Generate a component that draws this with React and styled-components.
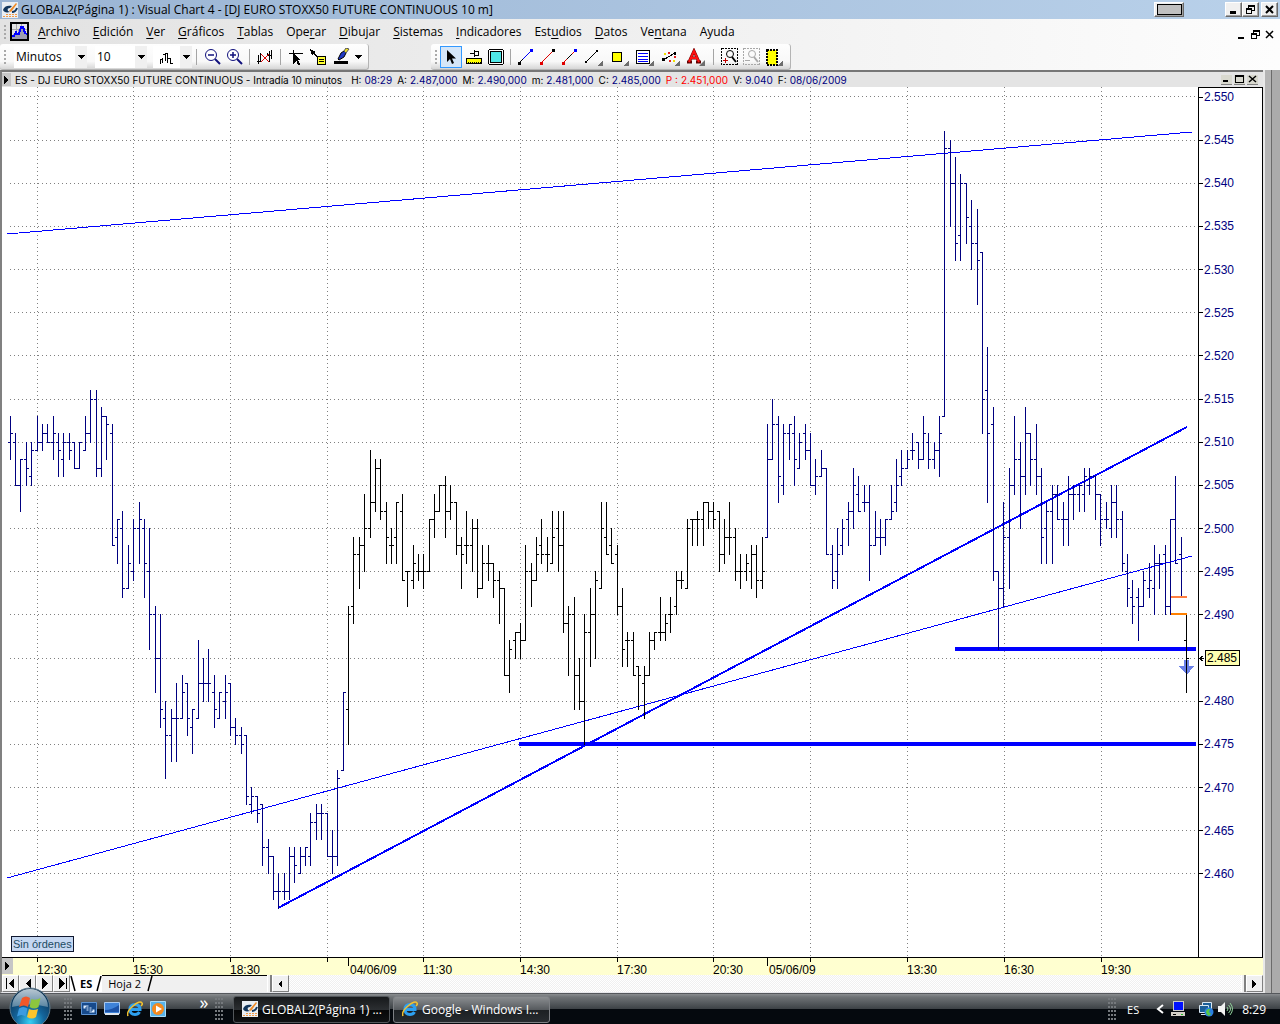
import React, { useState } from 'react';
import styled, { createGlobalStyle, css } from 'styled-components';

const GlobalStyle = createGlobalStyle`
  * { box-sizing: border-box; }
  body { margin: 0; font-family: "Open Sans", "Noto Sans", sans-serif; font-size: 12px; color: #000; background: #ababab; }
  button, select { font: inherit; color: inherit; margin: 0; padding: 0; border: 0; background: none; }
  svg { display: block; flex: none; }
`;

/* ---------- chart data ---------- */

// [open, high, low, close] of every 10 minute bar, in points over 2400
const BARS = [
  [110,113,108,111],[110,111,105,105],[105,108,102,108],[108,110,105,107],[106,110,105,109],[109,113,109,110],
  [110,112,109,111],[111,112,110,110],[110,113,108,111],[110,111,106,109],[108,111,106,110],[110,111,108,109],
  [110,110,107,107],[107,110,107,110],[109,113,109,111],[111,116,110,115],[115,116,106,107],[107,114,106,113],
  [113,113,108,112],[111,112,98,98],[99,101,96,101],[100,102,92,93],[93,98,93,96],[95,101,94,100],
  [100,103,96,101],[100,101,92,96],[95,100,86,90],[90,91,81,85],[85,90,77,79],[78,80,71,76],
  [76,79,73,78],[78,82,73,78],[78,83,78,81],[82,82,76,78],[77,79,74,79],[78,87,78,82],
  [82,85,80,82],[82,86,80,82],[81,83,77,79],[78,81,78,81],[80,83,78,81],[82,82,76,77],
  [77,78,75,76],[76,77,74,75],[76,76,68,69],[68,70,67,69],[69,69,66,67],[68,68,61,63],
  [63,64,60,62],[62,62,57,58],[58,60,56,58],[58,60,57,58],[58,63,57,62],[62,63,59,61],
  [60,63,60,62],[62,63,61,63],[62,67,61,66],[66,68,64,67],[67,68,64,67],[67,67,62,62],
  [62,65,60,62],[62,72,61,71],[72,81,72,81],[79,91,75,90],[91,99,89,97],[97,99,93,98],
  [98,104,95,100],[100,109,99,103],[103,108,102,107],[107,108,101,102],[102,103,96,99],[98,100,96,98],
  [99,103,96,103],[102,104,94,94],[95,95,91,95],[94,98,93,96],[95,97,94,95],[95,97,93,95],
  [95,101,95,101],[101,104,99,102],[102,105,102,105],[105,106,99,102],[102,105,101,103],[103,103,97,98],
  [98,99,93,97],[98,102,96,98],[98,101,95,100],[100,101,92,93],[93,98,93,96],[96,98,94,96],
  [96,96,92,94],[94,95,89,93],[93,93,83,83],[83,87,81,86],[87,88,85,88],[88,89,85,87],
  [87,98,87,95],[95,96,91,94],[94,99,94,97],[98,101,96,97],[97,99,95,97],[96,102,96,99],
  [100,102,95,98],[98,102,88,89],[89,91,83,90],[90,92,79,83],[83,85,79,80],[80,90,75,88],
  [88,93,84,90],[90,95,85,94],[93,103,93,100],[99,103,97,97],[98,100,96,96],[97,98,90,91],
  [91,93,84,86],[87,88,84,87],[87,88,83,83],[84,84,79,83],[82,84,78,83],[83,88,83,87],
  [87,88,86,88],[88,92,87,88],[88,90,87,89],[90,92,88,90],[91,95,90,94],[94,95,93,94],
  [93,101,93,100],[101,101,98,101],[101,102,98,101],[101,103,98,103],[103,103,100,102],[102,103,100,101],
  [102,102,95,97],[97,101,96,99],[99,103,97,99],[99,100,94,95],[95,97,93,95],[95,97,94,96],
  [95,98,93,97],[97,98,92,94],[94,99,93,95],[99,112,99,108],[108,115,108,112],[112,113,103,106],
  [105,112,104,111],[111,112,108,112],[111,113,105,108],[107,111,107,110],[111,112,108,109],[109,111,105,105],
  [105,108,104,106],[106,109,106,107],[107,107,97,97],[97,98,93,94],[95,100,93,97],[98,101,97,100],
  [101,103,98,102],[102,107,100,105],[104,106,102,102],[103,105,102,103],[103,105,94,98],[98,102,98,99],
  [99,101,97,99],[99,101,98,101],[101,105,101,102],[103,108,102,105],[106,109,105,107],[107,109,107,108],
  [109,111,108,109],[110,110,107,108],[108,113,108,111],[110,111,107,108],[108,110,107,109],[109,113,106,111],
  [113,146,113,144],[144,145,135,140],[140,143,131,133],[134,141,131,140],[140,140,133,136],[135,138,130,133],
  [133,137,126,131],[132,132,111,115],[116,121,103,111],[112,114,94,95],[95,95,86,93],[93,103,91,99],
  [99,107,93,105],[105,113,104,108],[108,110,100,106],[106,114,104,111],[111,111,105,108],[108,112,104,106],
  [106,107,96,99],[100,103,96,102],[102,105,96,104],[104,105,101,101],[101,103,98,101],[101,106,98,104],
  [104,105,101,104],[104,105,102,105],[104,107,102,106],[105,107,104,106],[106,106,101,104],[104,104,98,101],
  [101,103,100,101],[100,105,99,103],[103,105,99,101],[101,102,95,96],[95,97,91,93],[92,94,89,91],
  [92,93,87,91],[91,95,91,94],[93,96,92,94],[93,98,90,96],[96,97,93,96],[97,98,90,91],
  [91,101,90,101],[101,106,96,96],[97,99,92,92],[87,90,81,85],
];

const PLOT_W = 1196;
const PLOT_H = 870;
const LAST = 2485;
const LEVELS = Array.from({ length: 19 }, (_, i) => 2550 - i * 5);
const GRID_X = [35, 131, 228, 325, 421, 518, 615, 711, 808, 905, 1002, 1099];

const TIMES = [
  { x: 35, label: '12:30' },
  { x: 131, label: '15:30' },
  { x: 228, label: '18:30' },
  { x: 325 },
  { x: 346, label: '04/06/09', day: true },
  { x: 421, label: '11:30' },
  { x: 518, label: '14:30' },
  { x: 615, label: '17:30' },
  { x: 711, label: '20:30' },
  { x: 765, label: '05/06/09', day: true },
  { x: 808 },
  { x: 905, label: '13:30' },
  { x: 1002, label: '16:30' },
  { x: 1099, label: '19:30' },
];

const yOf = (price) => Math.round(9.4 + (2550 - price) * 8.633) + 0.5;
const xOf = (i) => Math.floor(8.15 + i * 5.372) + 0.5;

// the session of the 4th and the bar in progress are drawn in black
const isBlack = (i) => (i >= 63 && i <= 140) || i === BARS.length - 1;

const barPath = (black) =>
  BARS.map(([o, h, l, c], i) => {
    if (isBlack(i) !== black) return '';
    const x = xOf(i);
    return (
      `M${x} ${yOf(2400 + h) - 0.5}V${yOf(2400 + l) + 0.5}` +
      `M${x - 2.5} ${yOf(2400 + o)}H${x}M${x} ${yOf(2400 + c)}H${x + 2.5}`
    );
  }).join('');

const fmt = (n) => (n / 1000).toFixed(3);

/* ---------- window frame ---------- */

const Screen = styled.div`
  display: flex;
  flex-direction: column;
  min-height: 100vh;
  background: #f0f0f0;
`;

const TitleBar = styled.header`
  display: flex;
  align-items: center;
  height: 19px;
  padding: 0 2px;
  background: linear-gradient(90deg, #9ab4d3, #b9d1ea);
`;

const Title = styled.h1`
  flex: 1;
  margin: 0 0 0 3px;
  font-size: 12px;
  line-height: 18px;
  font-weight: 400;
  white-space: nowrap;
`;

const FrameButton = styled.button`
  display: flex;
  align-items: center;
  justify-content: center;
  width: ${(p) => p.$wide || 17}px;
  height: 15px;
  margin-right: ${(p) => p.$after || 0}px;
  background: #f0f0f0;
  border: 1px solid;
  border-color: #fff #696969 #696969 #fff;
  box-shadow: inset -1px -1px #a0a0a0;
`;

const Placeholder = styled.span`
  width: 25px;
  height: 11px;
  border: 1px solid #000;
  background: #c0c0c0;
`;

const Bars = styled.div`
  background: linear-gradient(90deg, #e2e2e2, #fdfdfd);
`;

const MenuBar = styled.nav`
  display: flex;
  align-items: center;
  height: 25px;
  padding: 0 5px 0 4px;
`;

const Grip = styled.span`
  flex: none;
  width: 2px;
  height: 14px;
  margin-right: ${(p) => p.$after || 0}px;
  background: repeating-linear-gradient(#a9a9a9 0 2px, transparent 2px 4px);
`;

const MenuList = styled.div`
  display: flex;
  flex: 1;
  gap: 13px;
  margin-left: 9px;
`;

const MenuButton = styled.button`
  line-height: 20px;
  u { text-underline-offset: 2px; }
`;

const ChildControls = styled.div`
  display: flex;
  gap: 3px;
  padding-top: 6px;
`;

const IconButton = styled.button`
  display: flex;
  align-items: center;
  justify-content: center;
`;

const ToolRow = styled.div`
  display: flex;
  height: 26px;
  gap: 62px;
`;

const ToolBar = styled.div`
  display: flex;
  align-items: center;
  height: 26px;
  padding: 0 4px;
  background: linear-gradient(#fefefe, #f8f8f8 70%, #d6d6d6);
  border-right: 1px solid #b4b4b4;
  border-bottom: 1px solid #b4b4b4;
  border-radius: 3px;
`;

const Combo = styled.div`
  position: relative;
  width: ${(p) => p.$width}px;
  margin-left: ${(p) => p.$before || 8}px;
  height: 22px;
  background: #fff;
`;

const Select = styled.select`
  appearance: none;
  width: 100%;
  height: 22px;
  padding: 0 2px;
  outline: 0;
`;

const ComboArrow = styled.span`
  position: absolute;
  top: 0;
  right: 0;
  display: flex;
  align-items: center;
  justify-content: center;
  width: 12px;
  height: 22px;
  background: #f0f0f0;
  pointer-events: none;
`;

const ToolSep = styled.span`
  width: 1px;
  height: 16px;
  margin: 0 4px;
  background: #a5a5a5;
`;

const Tool = styled.button`
  display: flex;
  align-items: center;
  justify-content: center;
  width: ${(p) => p.$width || 22}px;
  height: 22px;
  ${(p) =>
    p.$active &&
    css`
      background: #d5e6f8;
      border: 1px solid #3399ff;
    `}
`;

/* ---------- chart window ---------- */

const Workspace = styled.main`
  display: flex;
  flex: 1;
`;

const ChartWindow = styled.section`
  display: flex;
  flex: 1;
  flex-direction: column;
  min-width: 0;
  border-left: 2px solid #808080;
  border-top: 2px solid #767676;
  border-bottom: 1px solid #e8e8ec;
  background: #fff;
`;

const Strip = styled.div`
  display: flex;
  width: 17px;
  border-left: 2px solid #e8e8e8;
  background: linear-gradient(90deg, #b4b4b4 0 6px, #6b6b6b 6px 7px, #ababab 7px);
`;

const Caption = styled.header`
  display: flex;
  align-items: center;
  height: 15px;
  padding-right: 5px;
  background: #e4e4e4;
  font: 10px Inter, "Liberation Sans", sans-serif;
`;

const Expand = styled.button`
  display: flex;
  align-items: center;
  justify-content: center;
  width: 9px;
  height: 13px;
  background: #c6c6c6;
`;

const Quote = styled.dl`
  display: flex;
  flex: 1;
  gap: 5px;
  margin: 0 0 0 9px;
  white-space: nowrap;
`;

const Field = styled.div`
  display: flex;
  gap: 3px;
  color: ${(p) => p.$color || '#000'};
  dd { margin: 0; color: ${(p) => p.$color || '#000080'}; }
`;

const Name = styled.span`
  margin-left: 4px;
  white-space: nowrap;
`;

const CaptionButtons = styled.div`
  display: flex;
  gap: 2px;
`;

const CaptionButton = styled.button`
  display: flex;
  align-items: center;
  justify-content: center;
  width: 11px;
  height: 10px;
  background: #d8d8ce;
  border-bottom: 1px solid #808080;
`;

const ChartBody = styled.div`
  display: flex;
  flex: 1;
  min-height: 600px;
  border-bottom: 1px solid #000;
`;

const PlotArea = styled.div`
  position: relative;
  flex: 1;
  min-width: 0;
`;

const PlotSvg = styled.svg`
  position: absolute;
  width: 100%;
  height: 100%;
`;

const Orders = styled.button`
  position: absolute;
  left: 9px;
  bottom: 5px;
  height: 16px;
  padding: 0 1px;
  border: 1px solid #101830;
  background: #c6d8f2;
  color: #1d4b63;
  font: 11px/14px "Liberation Sans", Arial, sans-serif;
`;

const PriceAxis = styled.ol`
  display: flex;
  flex-direction: column;
  justify-content: space-between;
  width: 65px;
  margin: 0;
  padding: 1px 0 75px;
  list-style: none;
  border: 1px solid #000;
  border-bottom: 0;
  color: #000080;
  font: 12px/16px "Liberation Sans", Arial, sans-serif;
`;

const Level = styled.li`
  display: flex;
  align-items: center;
  height: 16px;
  &::before {
    content: '';
    width: 4px;
    height: 1px;
    margin-right: 1px;
    background: #000;
  }
`;

const LastPrice = styled.li`
  display: flex;
  align-items: center;
  gap: 1px;
  height: 16px;
  color: #000;
  span {
    padding: 0 2px 0 1px;
    line-height: 14px;
    border: 1px solid #000;
    background: #ffffb0;
  }
`;

const TimeRow = styled.div`
  display: flex;
  align-items: stretch;
  height: 17px;
  background: #ffffd0;
`;

const TimeSvg = styled.svg`
  flex: 1;
  height: 17px;
  overflow: visible;
  font: 12px "Liberation Sans", Arial, sans-serif;
`;

const TimeArea = styled.div`
  display: flex;
  flex: 1;
  margin-left: -11px;
  padding-right: 65px;
`;

const TimeExpand = styled(Expand)`
  position: relative;
  width: 11px;
  height: 16px;
`;

const SheetBar = styled.div`
  display: flex;
  align-items: stretch;
  height: 17px;
  background: #f0f0f0;
`;

const SheetButton = styled.button`
  display: flex;
  align-items: center;
  justify-content: center;
  width: 17px;
  background: #f0f0f0;
  border: 1px solid;
  border-color: #fff #808080 #808080 #fff;
`;

const Sheets = styled.div`
  display: flex;
  width: 197px;
  border-top: 1px solid #000;
`;

const Sheet = styled.button`
  display: flex;
  align-items: center;
  gap: ${(p) => (p.$on ? 4 : 6)}px;
  padding-left: ${(p) => (p.$on ? 0 : 6)}px;
  line-height: 15px;
  margin-top: -1px;
  font-size: 11px;
  font-weight: ${(p) => (p.$on ? 700 : 400)};
  background: ${(p) => (p.$on ? '#fff' : 'none')};
`;

const Splitter = styled.span`
  width: 5px;
  border-right: 2px solid #808080;
  border-left: 1px solid #fff;
`;

const Track = styled.div`
  flex: 1;
  background: repeating-conic-gradient(#f0f0f0 0 25%, #fff 0 50%) 0 0 / 2px 2px;
`;

/* ---------- taskbar ---------- */

const TaskBar = styled.footer`
  position: relative;
  display: flex;
  align-items: center;
  height: 31px;
  padding: 0 14px 0 64px;
  border-top: 1px solid #55585c;
  background: linear-gradient(#8a8d90, #6f7376 3px, #3c4145 15px, #05090e 15px, #05090e);
  color: #fff;
`;

const StartButton = styled.button`
  position: absolute;
  left: 9px;
  bottom: -5px;
`;

const TaskGrip = styled.span`
  flex: none;
  width: 8px;
  height: 22px;
  background: radial-gradient(circle at 1px 1px, #75797d 1px, transparent 1px) 0 0 / 3px 4px;
`;

const QuickLaunch = styled.div`
  display: flex;
  gap: 7px;
  margin-left: 9px;
`;

const More = styled.button`
  width: 12px;
  margin: -14px 5px 0 32px;
  font-size: 18px;
  line-height: 16px;
`;

const Task = styled.button`
  display: flex;
  align-items: center;
  gap: 4px;
  width: 157px;
  height: 27px;
  margin-left: ${(p) => p.$before}px;
  padding: 0 8px;
  border: 1px solid ${(p) => (p.$active ? '#53575b' : '#7d8084')};
  border-radius: 3px;
  background: ${(p) =>
    p.$active
      ? 'linear-gradient(#17191b, #2c2f32 13px, #050607 13px, #101214)'
      : 'linear-gradient(#8b8e91, #55595d 13px, #1c2023 13px, #272b2f)'};
  white-space: nowrap;
`;

const Tray = styled.div`
  display: flex;
  align-items: center;
  margin-left: auto;
`;

const TrayText = styled.span`
  margin: ${(p) => p.$margin};
  font-size: ${(p) => p.$size || 12}px;
`;

/* ---------- icons ---------- */

const Down = () => (
  <svg width="7" height="4" shapeRendering="crispEdges">
    <path d="M0 0h7L3.500 4z" />
  </svg>
);

const Ico = ({ w = 16, h = 16, children, soft }) => (
  <svg width={w} height={h} viewBox={`0 0 ${w} ${h}`} fill="none" stroke="#000" shapeRendering={soft ? 'auto' : 'crispEdges'}>
    {children}
  </svg>
);

const Corner = () => <path d="M18 12v6h-6z" fill="#6d6d6d" stroke="none" />;

const AppIcon = () => (
  <Ico soft>
    <path d="M0 0h16v16H0z" fill="#e9eef3" stroke="none" />
    <path d="M1 8c1-4 5-5 9-4l-2 2c-2 0-3 1-2 3l2 1c-4 1-6 0-7-2z" fill="#12365c" stroke="none" />
    <path d="M7 9l7-8 1 1-6 8z" fill="#f08a24" stroke="none" />
    <path d="M10 10c3 0 4-1 5-4" stroke="#12365c" strokeWidth="2" />
    <path d="M4 12.500h11M1 14.500h14" stroke="#f39a45" strokeDasharray="2 1" />
  </Ico>
);

const ChartIcon = () => (
  <Ico w={19} h={19}>
    <path d="M0 0h19v19H0z" fill="#000" stroke="none" />
    <path d="M2 2h15v15H2z" fill="#e4e4e4" stroke="none" />
    <path d="M6.500 2v15M11.500 2v15M2 7.500h15" stroke="#a8a8a8" />
    <path d="M2 17v-3l3-4 2 2 3-7h3l4 7v5z" fill="#9c9cb0" stroke="none" />
    <path d="M2 14h2l2-4 1 2h2l2-7h2l2 6 2 1" stroke="#0000ff" strokeWidth="2" />
  </Ico>
);

const Min = ({ bold }) => (
  <Ico w={11} h={11}>
    <path d="M2 8.500h6" strokeWidth={bold ? 3 : 2} />
  </Ico>
);

const Restore = () => (
  <Ico w={11} h={11}>
    <path d="M3 1.500h7M3.500 1v3M9.500 1v6M7 6.500h3M3 2.500h7M1 4.500h6M1 5.500h6M1.500 4v6M6.500 4v6M1 9.500h6" />
  </Ico>
);

const Close = ({ bold }) => (
  <Ico w={11} h={11} soft>
    <path d="M2 2l7 7M9 2l-7 7" strokeWidth={bold ? 2 : 1.500} />
  </Ico>
);

const BarsIcon = () => (
  <Ico w={14}>
    <path d="M1.500 10v5M1 10.500h2M3.500 9v5M6.500 4v8M6 5.500h-2M7 4.500h2M8.500 4v10M11.500 9v6M11 9.500h-2M11.500 14.500h3" />
  </Ico>
);

const Magnifier = ({ plus }) => (
  <Ico w={17} h={17} soft>
    <circle cx="7" cy="7" r="5.500" stroke="#10107c" fill="#fff" />
    <path d="M11 11l5 5" stroke="#10107c" strokeWidth="2" />
    <path d={plus ? 'M4 7h6M7 4v6' : 'M4 7h6'} stroke="#10107c" strokeWidth="1.500" />
  </Ico>
);

const NoBars = () => (
  <Ico>
    <path d="M1.500 6v9M3.500 4v9M0 12.500h4M12.500 2v11M14.500 1v9M11 6.500h4M10.500 4v3" />
    <path d="M4 5l8 8M12 5l-8 8" stroke="#e00000" />
  </Ico>
);

const CrossCursor = () => (
  <Ico>
    <path d="M1 4.500h14M5.500 1v14" />
    <path d="M6 5l7 6-3 .5 2 4-2 .5-1.500-4L6 14z" fill="#000" stroke="none" />
  </Ico>
);

const NoteCursor = () => (
  <Ico>
    <path d="M0 0l6 3-2 1 4 4-1 1-4-4-1 2z" fill="#000" stroke="none" />
    <path d="M7.500 7.500h8v8h-8z" fill="#ffff30" />
    <path d="M9 10.500h5M9 12.500h5" />
  </Ico>
);

const Pen = () => (
  <Ico w={17} h={17} soft>
    <path d="M1 13h14v3H1z" fill="#000" stroke="none" />
    <path d="M5 11l3-6 3-2 2 2-2 4-5 3z" fill="#2038c0" stroke="#000" />
    <path d="M11 3l2-3 3 1-3 4z" fill="#f0e020" stroke="#555" />
  </Ico>
);

const Pointer = () => (
  <Ico soft>
    <path d="M4 1v12l3-3 2 5 2-1-2-4.500h4z" fill="#000" stroke="none" />
  </Ico>
);

const Ruler = () => (
  <Ico>
    <path d="M0 9h16v6H0z" fill="#000" stroke="none" />
    <path d="M1 10h14v4H1z" fill="#ffff00" stroke="none" />
    <path d="M2 13.500h13" strokeDasharray="1 1" />
    <path d="M4 4.500h4M8.500 1v7M9 2.500h4M9 6.500h4M12.500 2v5" />
  </Ico>
);

const Frame = () => (
  <Ico>
    <path d="M1.500.5h13l1 1v13l-1 1h-13l-1-1v-13z" fill="#fff" />
    <path d="M2.500 2.500h11v11h-11z" fill="#50e8e8" />
  </Ico>
);

const Segment = ({ from, to, mid }) => (
  <Ico w={18} h={18}>
    <path d="M2 15L15 2" stroke={from} />
    {mid && <path d="M6 11l5-5" stroke={mid} />}
    <path d="M1 14h3v3H1z" fill={from} stroke="none" />
    <path d="M13 1h3v3h-3z" fill={to} stroke="none" />
  </Ico>
);

const HalfLine = () => (
  <Ico w={18} h={18}>
    <path d="M2 15l4-4" />
    <path d="M6 11l9-9" stroke="#0000ff" />
    <path d="M1 14h3v3H1z" fill="#000" stroke="none" />
    <path d="M13 1h3v3h-3z" fill="#0000ff" stroke="none" />
  </Ico>
);

const LineIcon = () => (
  <Ico w={18} h={18}>
    <path d="M1 14L12 3" />
    <path d="M0 13h2v2H0zM11 2h2v2h-2z" fill="#000" stroke="none" />
    <Corner />
  </Ico>
);

const SquareIcon = () => (
  <Ico w={18} h={18}>
    <path d="M1.500 4.500h9v9h-9z" fill="#ffff00" />
    <Corner />
  </Ico>
);

const LinesIcon = () => (
  <Ico w={19} h={18}>
    <path d="M.5 2.500h13v13H.5z" fill="#fff" />
    <path d="M2 5.500h10M2 8.500h10M2 11.500h10M2 13.500h10" stroke="#0000ff" />
    <Corner />
  </Ico>
);

const ScatterIcon = () => (
  <Ico w={19} h={18}>
    <path d="M1 12l12-7" />
    <path d="M0 10h3v3H0zM12 4h2v3h-2z" fill="#000" stroke="none" />
    <path d="M2 5h2v2H2zM11 12h2v2h-2z" fill="#f0e000" stroke="none" />
    <path d="M6 4h2v2H6zM7 12h2v2H7zM12 8h2v2h-2z" fill="#e02020" stroke="none" />
    <Corner />
  </Ico>
);

const LetterIcon = () => (
  <Ico w={19} h={18} soft>
    <path d="M2 14l5-11 5 11M4 10h6M0 14h5M9 14h5" stroke="#600000" strokeWidth="3" />
    <path d="M2 14l5-11 5 11M4 10h6" stroke="#ff1010" strokeWidth="2" />
    <Corner />
  </Ico>
);

const ZoomBox = ({ color, sign, plus }) => (
  <Ico w={17} h={17}>
    <path d="M.5.5h16v16H.5z" stroke={color} strokeDasharray="2 1" />
    <g shapeRendering="auto">
      <circle cx="9" cy="6" r="3.500" stroke={color} />
      <path d="M11 9l4 5" stroke={color} strokeWidth="2" />
    </g>
    <path d={plus ? 'M2 12.500h5M4.500 10v5' : 'M2 12.500h5'} stroke={sign} />
  </Ico>
);

const FilmIcon = () => (
  <Ico w={19} h={18}>
    <path d="M1.500 1.500h10v15h-10z" fill="#ffff00" strokeWidth="2" strokeDasharray="2 1" />
    <path d="M3 3h7v12H3z" fill="#ffff00" stroke="none" />
    <Corner />
  </Ico>
);

const NavArrow = ({ back, end }) => (
  <Ico w={12} h={11}>
    <path d={back ? 'M9 0v11L3.500 5.500z' : 'M3 0v11l5.500-5.500z'} fill="#000" stroke="none" />
    {end && <path d={back ? 'M1.500 0v11' : 'M10.500 0v11'} />}
  </Ico>
);

const SmallArrow = ({ back }) => (
  <Ico w={5} h={8}>
    <path d={back ? 'M4 0v8L0 4z' : 'M0 0v8l4-4z'} fill="#000" stroke="none" />
  </Ico>
);

const Slant = ({ down }) => (
  <Ico w={6} h={16} soft>
    <path d={down ? 'M1 0l4 15' : 'M5 0L1 15'} strokeWidth="1.500" />
  </Ico>
);

const WindowsOrb = () => (
  <svg width="42" height="42" viewBox="0 0 42 42">
    <defs>
      <radialGradient id="orb" cx="50%" cy="85%" r="80%">
        <stop offset="0" stopColor="#35d0f5" />
        <stop offset=".45" stopColor="#14659c" />
        <stop offset="1" stopColor="#0b2c4a" />
      </radialGradient>
      <linearGradient id="gloss" x2="0" y2="1">
        <stop offset="0" stopColor="#e4eef4" />
        <stop offset="1" stopColor="#6b92ab" />
      </linearGradient>
    </defs>
    <circle cx="21" cy="21" r="20" fill="url(#orb)" stroke="#5d7a8c" />
    <path d="M3 20a18 18 0 0 1 36 0q-18-5-36 0z" fill="url(#gloss)" opacity=".8" />
    <path d="M13 11q4-3 8 0l-2 9q-4-3-9 0z" fill="#f0582a" />
    <path d="M22.500 12q4 2 9-1l-2 9q-4 3-9 0z" fill="#8cc63e" />
    <path d="M10 21.500q4-3 8.500 0l-2 8q-4-3-8.500 0z" fill="#3c9be0" />
    <path d="M20 22q4 2 9 0l-2 8q-4 3-9 0z" fill="#fcc52c" />
  </svg>
);

const WindowsFlip = () => (
  <Ico soft>
    <path d="M.5 1.500h15v12H.5z" fill="#174a8c" stroke="#5d93d2" />
    <path d="M2 4h6v4H2zM5 6h6v4H5zM8 8h6v4H8z" fill="#dcecff" stroke="#174a8c" />
  </Ico>
);

const Desktop = () => (
  <Ico soft>
    <path d="M.5 1.500h15v11H.5z" fill="#3e82d8" stroke="#a9c8ee" />
    <path d="M1 12h14v2H1z" fill="#dfe6ee" stroke="none" />
    <path d="M1 9q7 0 14-5v7H1z" fill="#1b52a8" stroke="none" />
  </Ico>
);

const Explorer = () => (
  <Ico soft>
    <path d="M3 8.500h10q0-5-5-5t-5 5 5 5q3 0 4.500-2.500" stroke="#2da0f0" strokeWidth="3" />
    <path d="M1 15Q-1 11 6 5t9-3q1 1-1 3" stroke="#f2c230" strokeWidth="1.500" />
  </Ico>
);

const Player = () => (
  <Ico soft>
    <path d="M.5.5h15v15H.5z" fill="#58b4ea" stroke="#a8dcf8" />
    <circle cx="8" cy="8" r="6" fill="#f58a1e" stroke="none" />
    <path d="M6 4.500v7L12 8z" fill="#fff" stroke="none" />
  </Ico>
);

const Computer = () => (
  <Ico>
    <path d="M3 0h11v10H3z" fill="#c8c8c8" stroke="none" />
    <path d="M4 1h9v8H4z" fill="#0010ff" stroke="none" />
    <path d="M1 11h14v4H1z" fill="#d4d0c8" stroke="none" />
    <path d="M3 13.500h3" />
    <path d="M11 13.500h2" stroke="#20c020" />
  </Ico>
);

const Network = () => (
  <Ico soft>
    <path d="M4.500 1.500h9v7h-9z" fill="#1b5f98" stroke="#d8e8f4" />
    <path d="M1.500 4.500h9v7h-9z" fill="#1b5f98" stroke="#d8e8f4" />
    <path d="M3 13.500h6" stroke="#d8e8f4" />
    <circle cx="11" cy="11" r="4.500" fill="#2b80e0" stroke="none" />
    <path d="M8 10q2-3 4-2l-1 3 2 2-2 2q-3-1-3-5z" fill="#58c848" stroke="none" />
  </Ico>
);

const Speaker = () => (
  <Ico soft>
    <path d="M1 5h3l4-4v14l-4-4H1z" fill="#f2f2f2" stroke="none" />
    <path d="M10 6q2 2 0 4M11.500 4q4 4 0 8M13 2q5 6 0 12" stroke="#8fd098" />
  </Ico>
);

/* ---------- parts ---------- */

const MENUS = [
  '_Archivo', '_Edición', '_Ver', '_Gráficos', '_Tablas', 'Ope_rar', '_Dibujar',
  '_Sistemas', '_Indicadores', 'Est_udios', '_Datos', 'Ve_ntana', 'Ayuda',
];

// the character after "_" is the access key
function MenuLabel({ text }) {
  const at = text.indexOf('_');
  if (at < 0) return text;
  return (
    <>
      {text.slice(0, at)}
      <u>{text[at + 1]}</u>
      {text.slice(at + 2)}
    </>
  );
}

const DRAW_TOOLS = [
  { name: 'Regla', icon: <Ruler />, width: 24 },
  { name: 'Marco', icon: <Frame />, width: 20 },
  null,
  { name: 'Semirrecta derecha', icon: <HalfLine /> },
  { name: 'Semirrecta izquierda', icon: <Segment from="#e00000" to="#000" /> },
  { name: 'Recta', icon: <Segment from="#e00000" to="#0000ff" mid="#000" /> },
  { name: 'Segmento', icon: <LineIcon />, width: 26 },
  { name: 'Rectángulo', icon: <SquareIcon />, width: 25 },
  { name: 'Fibonacci', icon: <LinesIcon />, width: 26 },
  { name: 'Regresión', icon: <ScatterIcon />, width: 26 },
  { name: 'Texto', icon: <LetterIcon />, width: 25 },
  null,
  { name: 'Ampliar zona', icon: <ZoomBox color="#000" sign="#c00000" plus /> },
  { name: 'Reducir zona', icon: <ZoomBox color="#a8a8a8" sign="#a8a8a8" /> },
  { name: 'Película', icon: <FilmIcon />, width: 24 },
];

function Tools() {
  const [unit, setUnit] = useState('Minutos');
  const [size, setSize] = useState('10');

  return (
    <ToolRow>
      <ToolBar>
        <Grip />
        <Combo $width={73}>
          <Select aria-label="Compresión" value={unit} onChange={(e) => setUnit(e.target.value)}>
            <option>Minutos</option>
            <option>Días</option>
          </Select>
          <ComboArrow><Down /></ComboArrow>
        </Combo>
        <Combo $width={52}>
          <Select aria-label="Unidades" value={size} onChange={(e) => setSize(e.target.value)}>
            <option>5</option>
            <option>10</option>
          </Select>
          <ComboArrow><Down /></ComboArrow>
        </Combo>
        <Combo $width={39} $before={6}>
          <Tool aria-label="Tipo de gráfico" $width={26}><BarsIcon /></Tool>
          <ComboArrow><Down /></ComboArrow>
        </Combo>
        <ToolSep />
        <Tool aria-label="Reducir"><Magnifier /></Tool>
        <Tool aria-label="Ampliar"><Magnifier plus /></Tool>
        <ToolSep />
        <Tool aria-label="Quitar"><NoBars /></Tool>
        <ToolSep />
        <Tool aria-label="Cursor"><CrossCursor /></Tool>
        <Tool aria-label="Etiqueta"><NoteCursor /></Tool>
        <Tool aria-label="Color" $width={24}><Pen /></Tool>
        <Tool aria-label="Más colores" $width={11}><Down /></Tool>
      </ToolBar>
      <ToolBar>
        <Grip $after={3} />
        <Tool aria-label="Seleccionar" $active><Pointer /></Tool>
        {DRAW_TOOLS.map((t, i) =>
          t ? (
            <Tool key={t.name} aria-label={t.name} $width={t.width}>{t.icon}</Tool>
          ) : (
            <ToolSep key={i} />
          )
        )}
      </ToolBar>
    </ToolRow>
  );
}

const QUOTE = [
  ['H:', '08:29'],
  ['A:', '2.487,000'],
  ['M:', '2.490,000'],
  ['m:', '2.481,000'],
  ['C:', '2.485,000'],
  ['P :', '2.451,000', '#ff0000'],
  ['V:', '9.040'],
  ['F:', '08/06/2009'],
];

function Plot() {
  return (
    <PlotSvg
      viewBox={`0 0 ${PLOT_W} ${PLOT_H}`}
      preserveAspectRatio="none"
      fill="none"
      shapeRendering="crispEdges"
      role="img"
      aria-label="DJ EURO STOXX50 FUTURE CONTINUOUS"
    >
      <g stroke="#808080" strokeDasharray="1 3">
        {LEVELS.map((p) => <path key={p} d={`M8 ${yOf(p)}H${PLOT_W}`} />)}
        {GRID_X.map((x) => <path key={x} d={`M${x + 0.5} 0V${PLOT_H}`} />)}
      </g>
      <g stroke="#0000ff">
        <path d="M517 657h677M953 562h241" strokeWidth="4" />
        <path d="M276 821L1185 340" strokeWidth="2" />
        <path d="M5 147L1190 45M5 791L1190 469" />
      </g>
      <path d={barPath(false)} stroke="#000080" />
      <path d="M1182 573h5v6h5l-7 9-8-9h5z" fill="#6a80e8" />
      <path d={barPath(true)} stroke="#000" />
      <path d="M1169 510h16" stroke="#ff7f40" strokeWidth="2" />
      <path d="M1169 527h16" stroke="#ff8000" strokeWidth="2" />
    </PlotSvg>
  );
}

function TimeAxis() {
  return (
    <TimeSvg>
      {TIMES.map((t) => {
        const x = `${(t.x / PLOT_W) * 100}%`;
        return (
          <svg key={t.x} x={x} overflow="visible">
            <rect width="1" height={t.day ? 8 : 4} shapeRendering="crispEdges" />
            {t.label && <text x={t.day ? 2 : 0} y="16">{t.label}</text>}
          </svg>
        );
      })}
    </TimeSvg>
  );
}

function ChartPane() {
  return (
    <ChartWindow>
      <Caption>
        <Expand aria-label="Desplegar"><SmallArrow /></Expand>
        <Name>ES - DJ EURO STOXX50 FUTURE CONTINUOUS - Intradía 10 minutos</Name>
        <Quote>
          {QUOTE.map(([name, value, color]) => (
            <Field key={name} $color={color}>
              <dt>{name}</dt>
              <dd>{value}</dd>
            </Field>
          ))}
        </Quote>
        <CaptionButtons>
          <CaptionButton aria-label="Minimizar"><Ico w={9} h={8}><path d="M1 6h5" strokeWidth="2" /></Ico></CaptionButton>
          <CaptionButton aria-label="Maximizar"><Ico w={9} h={8}><path d="M.5 1.500h8v6h-8zM0 .5h9" /></Ico></CaptionButton>
          <CaptionButton aria-label="Cerrar"><Ico w={9} h={8} soft><path d="M1 1l7 6M8 1L1 7" strokeWidth="1.500" /></Ico></CaptionButton>
        </CaptionButtons>
      </Caption>
      <ChartBody>
        <PlotArea>
          <Plot />
          <Orders>Sin órdenes</Orders>
        </PlotArea>
        <PriceAxis>
          {LEVELS.map((p) =>
            p === LAST ? (
              <LastPrice key={p}>
                <Ico w={5} h={7}><path d="M0 3.500h5M3.500 1L1 3.500 3.500 6" /></Ico>
                <span>{fmt(p)}</span>
              </LastPrice>
            ) : (
              <Level key={p}>{fmt(p)}</Level>
            )
          )}
        </PriceAxis>
      </ChartBody>
      <TimeRow>
        <TimeExpand aria-label="Desplegar escala"><SmallArrow /></TimeExpand>
        <TimeArea><TimeAxis /></TimeArea>
      </TimeRow>
      <SheetBar>
        <SheetButton aria-label="Primera"><NavArrow back end /></SheetButton>
        <SheetButton aria-label="Anterior"><NavArrow back /></SheetButton>
        <SheetButton aria-label="Siguiente"><NavArrow /></SheetButton>
        <SheetButton aria-label="Última"><NavArrow end /></SheetButton>
        <Sheets>
          <Sheet $on><Slant down />ES<Slant /></Sheet>
          <Sheet>Hoja 2<Slant /></Sheet>
        </Sheets>
        <Splitter />
        <SheetButton aria-label="Desplazar a la izquierda"><SmallArrow back /></SheetButton>
        <Track />
        <Splitter />
        <SheetButton aria-label="Desplazar a la derecha"><SmallArrow /></SheetButton>
      </SheetBar>
    </ChartWindow>
  );
}

function Taskbar() {
  return (
    <TaskBar>
      <StartButton aria-label="Inicio"><WindowsOrb /></StartButton>
      <TaskGrip />
      <QuickLaunch>
        <IconButton aria-label="Cambiar de ventana"><WindowsFlip /></IconButton>
        <IconButton aria-label="Mostrar escritorio"><Desktop /></IconButton>
        <IconButton aria-label="Internet Explorer"><Explorer /></IconButton>
        <IconButton aria-label="Reproductor"><Player /></IconButton>
      </QuickLaunch>
      <More aria-label="Más">»</More>
      <TaskGrip />
      <Task $active $before={10}><AppIcon />GLOBAL2(Página 1) ...</Task>
      <Task $before={3}><Explorer />Google - Windows I...</Task>
      <Tray>
        <TaskGrip />
        <TrayText $margin="0 17px 0 11px" $size={11}>ES</TrayText>
        <Ico w={8} h={10} soft><path d="M7 1L2 5l5 4" stroke="#fff" strokeWidth="2" /></Ico>
        <TrayText $margin="0 12px 0 6px"><Computer /></TrayText>
        <Network />
        <TrayText $margin="0 9px 0 3px"><Speaker /></TrayText>
        <time>8:29</time>
      </Tray>
    </TaskBar>
  );
}

function App() {
  return (
    <>
      <GlobalStyle />
      <Screen>
        <TitleBar>
          <AppIcon />
          <Title>GLOBAL2(Página 1) : Visual Chart 4 - [DJ EURO STOXX50 FUTURE CONTINUOUS 10 m]</Title>
          <FrameButton aria-label="Panel" $wide={30} $after={41}><Placeholder /></FrameButton>
          <FrameButton aria-label="Minimizar"><Min bold /></FrameButton>
          <FrameButton aria-label="Restaurar" $after={2}><Restore /></FrameButton>
          <FrameButton aria-label="Cerrar"><Close bold /></FrameButton>
        </TitleBar>
        <Bars>
          <MenuBar>
            <Grip $after={4} />
            <IconButton aria-label="Ventana del gráfico"><ChartIcon /></IconButton>
            <MenuList>
              {MENUS.map((m) => (
                <MenuButton key={m}><MenuLabel text={m} /></MenuButton>
              ))}
            </MenuList>
            <ChildControls>
              <IconButton aria-label="Minimizar ventana"><Min /></IconButton>
              <IconButton aria-label="Restaurar ventana"><Restore /></IconButton>
              <IconButton aria-label="Cerrar ventana"><Close /></IconButton>
            </ChildControls>
          </MenuBar>
          <Tools />
        </Bars>
        <Workspace>
          <ChartPane />
          <Strip />
        </Workspace>
        <Taskbar />
      </Screen>
    </>
  );
}

export default App;
